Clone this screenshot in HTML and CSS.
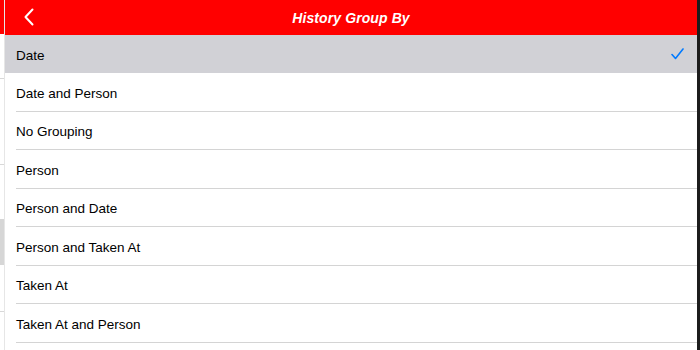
FILE: index.html
```html
<!DOCTYPE html>
<html lang="en">
<head>
<meta charset="UTF-8">
<meta name="viewport" content="width=device-width, initial-scale=1.0">
<title>History Group By</title>
<link rel="stylesheet" href="styles.css">
</head>
<body>

<div class="screen">
    <div class="behind">
        <div class="behind-bar"></div>
        <div class="behind-line first"></div>
        <div class="behind-line second"></div>
        <div class="behind-block"></div>
        <div class="behind-line third"></div>
    </div>

    <div class="panel">
        <div class="header">
            <button class="back" type="button">
                <svg width="10" height="18" viewBox="0 0 10 18">
                    <path d="M8.5 1.5 L1.5 9 L8.5 16.5" fill="none" stroke="#fff" stroke-width="2" stroke-linecap="round" stroke-linejoin="round"/>
                </svg>
            </button>
            <h1>History Group By</h1>
        </div>

        <ul class="options">
            <li class="selected">
                <span>Date</span>
                <svg class="check" width="13" height="12" viewBox="0 0 13 12">
                    <path d="M1 6.5 L4.5 10.5 L12 1" fill="none" stroke="#007aff" stroke-width="1.6" stroke-linecap="round" stroke-linejoin="round"/>
                </svg>
            </li>
            <li><span>Date and Person</span></li>
            <li><span>No Grouping</span></li>
            <li><span>Person</span></li>
            <li><span>Person and Date</span></li>
            <li><span>Person and Taken At</span></li>
            <li><span>Taken At</span></li>
            <li><span>Taken At and Person</span></li>
            <li><span></span></li>
        </ul>
    </div>

    <div class="edge"></div>
</div>

</body>
</html>
```

FILE: styles.css
```css
body {
    margin: 0;
    padding: 0;
    background-color: #fff;
    font-family: "Liberation Sans", Arial, sans-serif;
    overflow: hidden;
}

.screen {
    display: flex;
    width: 700px;
    height: 350px;
    overflow: hidden;
}

/* the view underneath the sheet, only a sliver shows */
.behind {
    width: 4px;
    flex-shrink: 0;
    display: flex;
    flex-direction: column;
    border-right: 1px solid #e6e6e6;
}

.behind-bar {
    height: 34px;
    flex-shrink: 0;
    background-color: #ff0000;
}

.behind-line {
    height: 1px;
    flex-shrink: 0;
    background-color: #d8d8d8;
}

.behind-line.first {
    margin-top: 44px;
}

.behind-line.second {
    margin-top: 85px;
}

.behind-block {
    height: 46px;
    flex-shrink: 0;
    margin-top: 54px;
    background-color: #d6d6d6;
}

.behind-line.third {
    margin-top: 46px;
}

.panel {
    flex: 1;
    background-color: #fff;
}

.header {
    height: 35px;
    background-color: #ff0000;
    display: flex;
    align-items: center;
    justify-content: center;
    position: relative;
}

.back {
    position: absolute;
    left: 19px;
    top: 8px;
    padding: 0;
    border: none;
    background: none;
    display: flex;
}

h1 {
    margin: 0;
    color: #fff;
    font-size: 14px;
    font-weight: bold;
    font-style: italic;
    letter-spacing: 0.1px;
}

.options {
    list-style: none;
    margin: 0;
    padding: 0;
}

.options li {
    box-sizing: border-box;
    height: 38.5px;
    margin-left: 11px;
    padding: 3px 13px 0 0;
    display: flex;
    align-items: center;
    justify-content: space-between;
    border-bottom: 1px solid #d4d4d4;
    font-size: 13.5px;
    color: #000;
}

.options li.selected {
    height: 38px;
    margin-left: 0;
    padding-left: 11px;
    background-color: #d1d1d6;
    border-bottom: none;
}

.check {
    margin-top: -3px;
}

.edge {
    width: 3px;
    flex-shrink: 0;
    background-color: #1c1c1c;
}
```
